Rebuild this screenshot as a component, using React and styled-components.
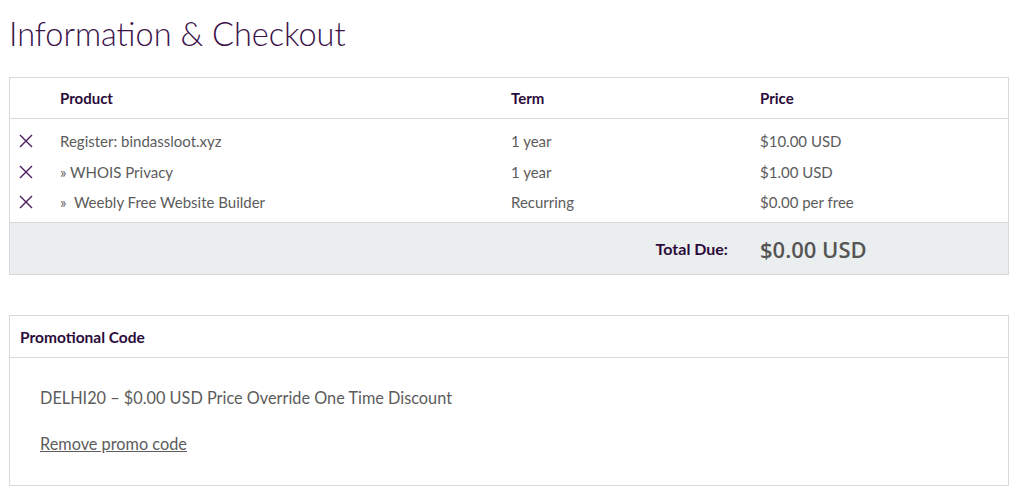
import React from 'react'
import styled, { createGlobalStyle } from 'styled-components'

const GlobalStyle = createGlobalStyle`
  body {
    margin: 0;
    background: #fff;
    font-family: 'Lato', 'Liberation Sans', sans-serif;
    color: #555;
  }
`

const Page = styled.div`
  width: 1000px;
  margin-left: 9px;
  padding-top: 13px;
`

const Title = styled.h1`
  margin: 0 0 22px;
  font-weight: 300;
  font-size: 32.5px;
  line-height: 42px;
  color: #3a1149;
`

const Box = styled.div`
  border: 1px solid #d8d8d8;
  margin-bottom: ${p => p.gap || 0}px;
`

const Row = styled.div`
  display: grid;
  grid-template-columns: 50px 451px 249px 1fr;
  align-items: center;
  height: ${p => p.h}px;
  font-size: 15px;
`

const HeadRow = styled(Row)`
  border-bottom: 1px solid #d8d8d8;
  font-weight: 700;
  font-size: 15px;
  color: #2b0b3a;
`

const Body = styled.div`
  padding: 6px 0 5px;
`

const Cell = styled.div`
  color: #5c5c5c;
  white-space: pre;
`

const Remove = styled.button`
  border: 0;
  background: none;
  padding: 0 0 0 9px;
  display: flex;
  align-items: center;
  cursor: pointer;
  color: #4b1a5e;
`

const TotalRow = styled.div`
  display: grid;
  grid-template-columns: 740px 1fr;
  align-items: center;
  height: 51px;
  background: #ebeeef;
  border-top: 1px solid #d8d8d8;
`

const TotalLabel = styled.div`
  text-align: right;
  font-weight: 700;
  font-size: 16px;
  color: #2b0b3a;
  padding-right: 22px;
`

const TotalValue = styled.div`
  font-family: 'Open Sans', sans-serif;
  font-weight: 600;
  font-size: 22px;
  color: #555;
  padding-left: 10px;
`

const PromoHead = styled.div`
  height: 41px;
  display: flex;
  align-items: center;
  padding-left: 10px;
  border-bottom: 1px solid #d8d8d8;
  font-weight: 700;
  font-size: 15.5px;
  color: #2b0b3a;
`

const PromoBody = styled.div`
  padding: 30px 30px 31px;
  font-size: 16.3px;
  color: #5c5c5c;
`

const PromoLine = styled.p`
  margin: 0 0 26px;
  line-height: 20px;
`

const PromoLink = styled.a`
  color: #5c5c5c;
  text-decoration: underline;
  line-height: 20px;
  cursor: pointer;
`

const XIcon = () => (
  <svg width="14" height="14" viewBox="0 0 14 14">
    <path d="M1 1L13 13M13 1L1 13" stroke="currentColor" strokeWidth="1.4" fill="none" />
  </svg>
)

const items = [
  { name: 'Register: bindassloot.xyz', term: '1 year', price: '$10.00 USD', h: 31 },
  { name: '» WHOIS Privacy', term: '1 year', price: '$1.00 USD', h: 31 },
  { name: '»  Weebly Free Website Builder', term: 'Recurring', price: '$0.00 per free', h: 30 },
]

export default function App() {
  return (
    <Page>
      <GlobalStyle />
      <Title>Information &amp; Checkout</Title>
      <Box gap={40}>
        <HeadRow h={40}>
          <div />
          <div>Product</div>
          <div>Term</div>
          <div>Price</div>
        </HeadRow>
        <Body>
          {items.map(it => (
            <Row key={it.name} h={it.h}>
              <Remove aria-label="remove"><XIcon /></Remove>
              <Cell>{it.name}</Cell>
              <Cell>{it.term}</Cell>
              <Cell>{it.price}</Cell>
            </Row>
          ))}
        </Body>
        <TotalRow>
          <TotalLabel>Total Due:</TotalLabel>
          <TotalValue>$0.00 USD</TotalValue>
        </TotalRow>
      </Box>
      <Box>
        <PromoHead>Promotional Code</PromoHead>
        <PromoBody>
          <PromoLine>DELHI20 – $0.00 USD Price Override One Time Discount</PromoLine>
          <PromoLink>Remove promo code</PromoLink>
        </PromoBody>
      </Box>
    </Page>
  )
}
